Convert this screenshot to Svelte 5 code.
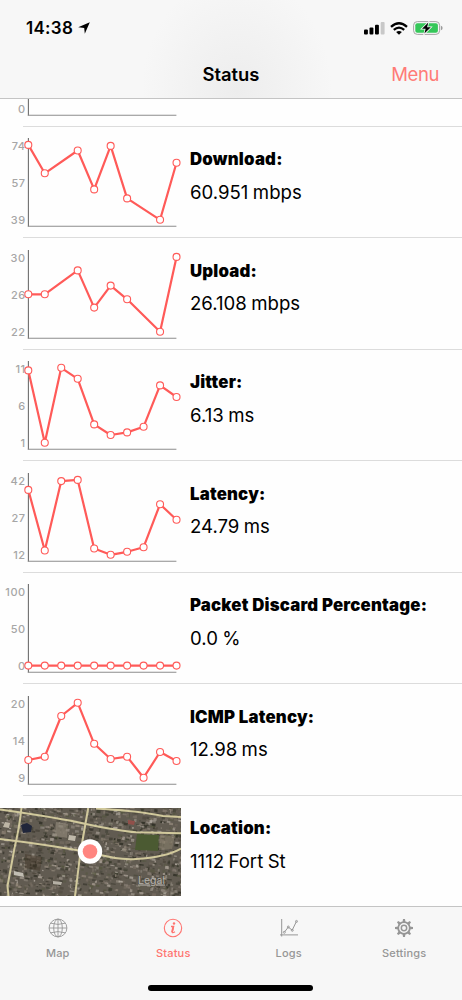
<script lang="ts">
  interface Metric {
    title: string;
    value: string;
    ticks: string[];
    points: [number, number][];
  }

  const STEP = 16.47;
  const AXIS_X = 28.3;
  const TICK_Y = [23.6, 61, 98.2];

  // each point is [sample index, y inside the row]
  const metrics: Metric[] = [
    { title: '', value: '', ticks: ['', '', '0'], points: [] },
    {
      title: 'Download:',
      value: '60.951 mbps',
      ticks: ['74', '57', '39'],
      points: [[0, 18.9], [1, 47.3], [3, 24.5], [4, 63.4], [5, 19.9], [6, 72.4], [8, 93.8], [9, 36.8]]
    },
    {
      title: 'Upload:',
      value: '26.108 mbps',
      ticks: ['30', '26', '22'],
      points: [[0, 56.3], [1, 56.3], [3, 32.4], [4, 69.6], [5, 47.6], [6, 61.3], [8, 93.8], [9, 18.9]]
    },
    {
      title: 'Jitter:',
      value: '6.13 ms',
      ticks: ['11', '6', '1'],
      points: [[0, 21.4], [1, 93.7], [2, 18.8], [3, 29.8], [4, 75.4], [5, 86], [6, 83.4], [7, 77.7], [8, 36.4], [9, 48]]
    },
    {
      title: 'Latency:',
      value: '24.79 ms',
      ticks: ['42', '27', '12'],
      points: [[0, 28.9], [1, 89.5], [2, 20.1], [3, 18.9], [4, 87.5], [5, 93.8], [6, 90.8], [7, 86.2], [8, 43.2], [9, 58.8]]
    },
    {
      title: 'Packet Discard Percentage:',
      value: '0.0 %',
      ticks: ['100', '50', '0'],
      points: [0, 1, 2, 3, 4, 5, 6, 7, 8, 9].map((i) => [i, 93.6] as [number, number])
    },
    {
      title: 'ICMP Latency:',
      value: '12.98 ms',
      ticks: ['20', '14', '9'],
      points: [[0, 76], [1, 72.7], [2, 32], [3, 18.8], [4, 59.8], [5, 75], [6, 72.7], [7, 93.7], [8, 68], [9, 77]]
    }
  ];

  const px = (i: number) => AXIS_X + i * STEP;
  const path = (points: [number, number][]) => points.map(([i, y]) => `${px(i)},${y}`).join(' ');

  // seeded generator, keeps the aerial texture stable between renders
  let seed = 42;
  function rand() {
    seed = (seed * 16807) % 2147483647;
    return seed / 2147483647;
  }

  const roofs = ['#94897b', '#aaa196', '#776d62', '#3b382f', '#2c2c22', '#4d473c', '#877d73', '#36382a', '#b5aea4', '#55563f'];
  const houses = Array.from({ length: 1900 }, () => ({
    x: rand() * 195 - 5,
    y: rand() * 112 - 15,
    w: 1 + rand() * 3.6,
    h: 0.9 + rand() * 2.3,
    fill: roofs[Math.floor(rand() * roofs.length)],
    opacity: 0.35 + rand() * 0.5
  }));

  const teeth = [0, 45, 90, 135, 180, 225, 270, 315];
</script>

<div class="screen">
  <header>
    <div class="status-bar">
      <div class="clock">
        <span>14:38</span>
        <svg width="12" height="12" viewBox="0 0 12 12"><path d="M11.8.2 6.8 11.8 6.2 6 .2 5.3Z" /></svg>
      </div>
      <div class="indicators">
        <svg width="21" height="13" viewBox="0 0 21 13">
          <rect x="0" y="7.6" width="3.9" height="4.9" rx="1" />
          <rect x="5.5" y="5.6" width="3.9" height="6.9" rx="1" />
          <rect x="11" y="2.8" width="3.9" height="9.7" rx="1" />
          <rect x="16.7" y="0" width="3.9" height="12.5" rx="1" fill="#c8c8c8" />
        </svg>
        <svg width="18" height="13" viewBox="0 0 18 13">
          <g fill="none" stroke="#000" stroke-width="2.3">
            <path d="M1 4.9Q9-2.4 17 4.9" />
            <path d="M3.8 7.9Q9 3.4 14.2 7.9" />
          </g>
          <path d="M9 12.8 6.1 10Q9 7.8 11.9 10Z" />
        </svg>
        <svg width="30" height="14" viewBox="0 0 30 14">
          <rect x=".6" y=".6" width="26" height="12.8" rx="3.7" fill="none" stroke="#a4a4a4" />
          <rect x="2.3" y="2.2" width="22.6" height="9.6" rx="2" fill="#35c759" />
          <path d="M27.9 4.7q1.7.6 1.7 2.3t-1.7 2.3Z" fill="#9b9b9b" />
          <path d="M15.3 1.6 9 7.8H12.6L11.4 12.6 17.8 6.2H14.1Z" stroke="#f7f7f7" stroke-width="1.6" paint-order="stroke" />
        </svg>
      </div>
    </div>
    <div class="nav-bar">
      <h1>Status</h1>
      <button class="menu">Menu</button>
    </div>
  </header>

  <main>
    {#each metrics as metric}
      <section class="row">
        <svg class="chart" width="181" height="111.55">
          <path class="y-axis" d="M28.4 12V100.6" />
          <path class="x-axis" d="M27.8 100.2H176.4" />
          {#each metric.ticks as tick, i}
            <text x="25.6" y={TICK_Y[i]}>{tick}</text>
          {/each}
          <polyline points={path(metric.points)} />
          {#each metric.points as [i, y]}
            <circle cx={px(i)} cy={y} r="3.5" />
          {/each}
        </svg>
        <div class="info">
          <h2>{metric.title}</h2>
          <p>{metric.value}</p>
        </div>
      </section>
    {/each}

    <section class="row">
      <svg class="map" width="181" height="88" viewBox="0 0 181 88">
        <rect width="181" height="88" fill="#615b51" />
        <g transform="rotate(7 90 44)">
          {#each houses as h}
            <rect x={h.x} y={h.y} width={h.w} height={h.h} fill={h.fill} opacity={h.opacity} />
          {/each}
        </g>
        <path d="M21 17l6-2 5 3-1 6-8 1Z" fill="#20263a" />
        <path d="M5 14l5 1-1 5-6-1Z" fill="#bdb5a5" />
        <path d="M56 14l12 2-1 14-12-2Z" fill="#928a7b" opacity=".6" />
        <path d="M69 27l7 1-1 5-7-1Z" fill="#c0b9aa" />
        <path d="M14 63l9 2 1 4-10-2Z" fill="#c2beb3" />
        <path d="M53 73l9 1-1 3-8-1Z" fill="#b5b0a5" />
        <path d="M128 12l7 1-1 4-6-1Z" fill="#91504a" />
        <path d="M25 46l17 3-2 14-15-3Z" fill="#443729" opacity=".5" />
        <path d="M137 26l22 1-1 16-23-1Z" fill="#4b5a32" />
        <path d="M160 27l15 1-3 13-13 1Z" fill="#8b826e" opacity=".55" />
        <g class="roads">
          <path d="M0 1.5Q60 10 86 16Q120 23 136 24.3L181 25.3" />
          <path d="M0 31Q50 37 90 44.5Q120 52.5 136 51Q166 49 181 40.5" />
          <path d="M96 .5Q140 3 163 8L181 9" />
          <path d="M21.5 0Q19 22 14.5 40L7.5 78L8.5 88" />
          <path d="M88.2 0L80.5 44L75 88" />
        </g>
        <circle cx="90" cy="43.5" r="12.2" fill="#fff" />
        <circle cx="90" cy="43.5" r="7.3" fill="#ff8580" />
        <text x="138" y="75.5">Legal</text>
      </svg>
      <div class="info">
        <h2>Location:</h2>
        <p>1112 Fort St</p>
      </div>
    </section>
  </main>

  <footer>
    <nav>
      <button class="tab">
        <svg width="20" height="20" viewBox="0 0 20 20">
          <circle cx="10" cy="10" r="8.9" />
          <ellipse cx="10" cy="10" rx="4.3" ry="8.9" />
          <path d="M10 1.1V18.9M1.1 10H18.9M2.8 5.2Q10 7.6 17.2 5.2M2.8 14.8Q10 12.4 17.2 14.8" />
        </svg>
        <span>Map</span>
      </button>
      <button class="tab active">
        <svg width="20" height="20" viewBox="0 0 20 20">
          <circle cx="10" cy="10" r="8.7" stroke-width="1.1" />
          <circle class="solid" cx="11" cy="5.5" r="1.2" />
          <path d="M8 8.5H10.6L9.2 14Q9 15.5 12 13.7" stroke-width="1.3" />
          <path d="M10.4 8.4 9 14" stroke-width="1.8" />
        </svg>
        <span>Status</span>
      </button>
      <button class="tab">
        <svg width="20" height="20" viewBox="0 0 20 20">
          <path d="M2.7 1V18.5M1 16.9H19" stroke-width="1" />
          <path d="M5.5 14 9.3 9.1 13.2 12.2 17.4 3.5" stroke-width="1" />
          <circle cx="5.3" cy="14.3" r="1" /><circle cx="9.3" cy="9" r="1" />
          <circle cx="13.3" cy="12.3" r="1" /><circle cx="17.5" cy="3.4" r="1" />
        </svg>
        <span>Logs</span>
      </button>
      <button class="tab">
        <svg width="20" height="20" viewBox="0 0 20 20">
          <circle cx="10" cy="10" r="5.8" stroke-width="1.8" />
          <circle cx="10" cy="10" r="2.7" stroke-width="1.5" />
          {#each teeth as angle}
            <path class="solid" d="M8.5 4.6 9 1H11L11.5 4.6Z" transform="rotate({angle} 10 10)" />
          {/each}
        </svg>
        <span>Settings</span>
      </button>
    </nav>
    <div class="home-indicator"></div>
  </footer>
</div>

<style>
  :global(body) {
    margin: 0;
    background: #fefefe;
  }

  .screen {
    display: flex;
    flex-direction: column;
    width: 462px;
    height: 1000px;
    overflow: hidden;
    background: #fefefe;
    color: #000;
    font-family: Inter, 'Liberation Sans', sans-serif;
  }

  h1, h2, p { margin: 0; }

  svg {
    display: block;
    flex-shrink: 0;
  }

  button {
    padding: 0;
    border: 0;
    background: none;
    font-family: inherit;
  }

  header {
    box-sizing: border-box;
    height: 99px;
    flex-shrink: 0;
    background: radial-gradient(ellipse 95px 115px at 237px 90px, #ededed, #f7f7f7);
    border-bottom: 1px solid #c4c4c4;
  }

  .status-bar {
    display: flex;
    align-items: center;
    justify-content: space-between;
    height: 56px;
    padding: 0 19px 0 26px;
  }

  .clock {
    display: flex;
    align-items: center;
    gap: 5px;
    font-size: 17px;
    font-weight: 600;
    letter-spacing: 0.3px;
    line-height: 20px;
  }

  .indicators {
    display: flex;
    align-items: center;
    gap: 5px;
  }

  .nav-bar {
    display: grid;
    grid-template-columns: 1fr auto 1fr;
    align-items: center;
    height: 36px;
    padding: 0 23px;
  }

  h1 {
    grid-column: 2;
    font-size: 18.4px;
    font-weight: 600;
    line-height: 24px;
  }

  .menu {
    justify-self: end;
    color: #ff7b76;
    font-size: 18.5px;
    letter-spacing: -0.4px;
    line-height: 24px;
  }

  /* rows hang from the bottom, the first one slides under the header */
  main {
    display: flex;
    flex-direction: column;
    justify-content: flex-end;
    height: 808.4px;
    flex-shrink: 0;
    overflow: hidden;
  }

  .row {
    display: flex;
    height: 111.55px;
    flex-shrink: 0;
    background: linear-gradient(#dcdcdc, #dcdcdc) 23px 100% / 100% 1px no-repeat;
  }

  .chart { margin-top: -0.4px; }

  .chart text {
    fill: #a6a6a6;
    font-size: 11px;
    font-weight: 500;
    letter-spacing: 0.5px;
    text-anchor: end;
  }

  .y-axis, .x-axis {
    fill: none;
    stroke: #6e6e6e;
    stroke-width: 1.1;
  }

  .x-axis { stroke: #8c8c8c; }

  polyline {
    fill: none;
    stroke: #ff5a58;
    stroke-width: 2.2;
    stroke-linejoin: round;
  }

  .chart circle {
    fill: #fff;
    stroke: #ff5a58;
    stroke-width: 1.1;
  }

  .map { margin-top: 12.4px; }

  .map text {
    fill: #b5b2ac;
    font-size: 10.5px;
    text-decoration: underline;
  }

  .roads path {
    fill: none;
    stroke: #d1c99c;
    stroke-width: 2;
  }

  .info { padding: 20.6px 0 0 9px; }

  h2 {
    height: 24px;
    font-size: 16.8px;
    font-weight: 900;
    letter-spacing: 0.2px;
    line-height: 24px;
    white-space: nowrap;
  }

  p {
    margin-top: 7.4px;
    font-size: 18.6px;
    font-weight: 380;
    line-height: 26px;
    word-spacing: -0.8px;
  }

  footer {
    display: flex;
    flex-direction: column;
    align-items: center;
    box-sizing: border-box;
    height: 94px;
    margin-top: -1.4px;
    background: #f7f7f7;
    border-top: 1px solid #c4c4c4;
  }

  nav {
    display: flex;
    width: 100%;
    height: 78px;
  }

  .tab {
    display: flex;
    flex: 1;
    flex-direction: column;
    align-items: center;
    gap: 8px;
    padding-top: 11px;
    color: #969696;
    font-size: 11px;
    font-weight: 500;
    letter-spacing: 0.2px;
    line-height: 14px;
  }

  .tab.active { color: #ff7470; }

  .tab svg {
    fill: none;
    stroke: currentColor;
    stroke-width: 0.9;
  }

  .tab .solid {
    fill: currentColor;
    stroke: none;
  }

  .home-indicator {
    width: 165px;
    height: 6px;
    margin-right: 1px;
    border-radius: 3px;
    background: #000;
  }
</style>
